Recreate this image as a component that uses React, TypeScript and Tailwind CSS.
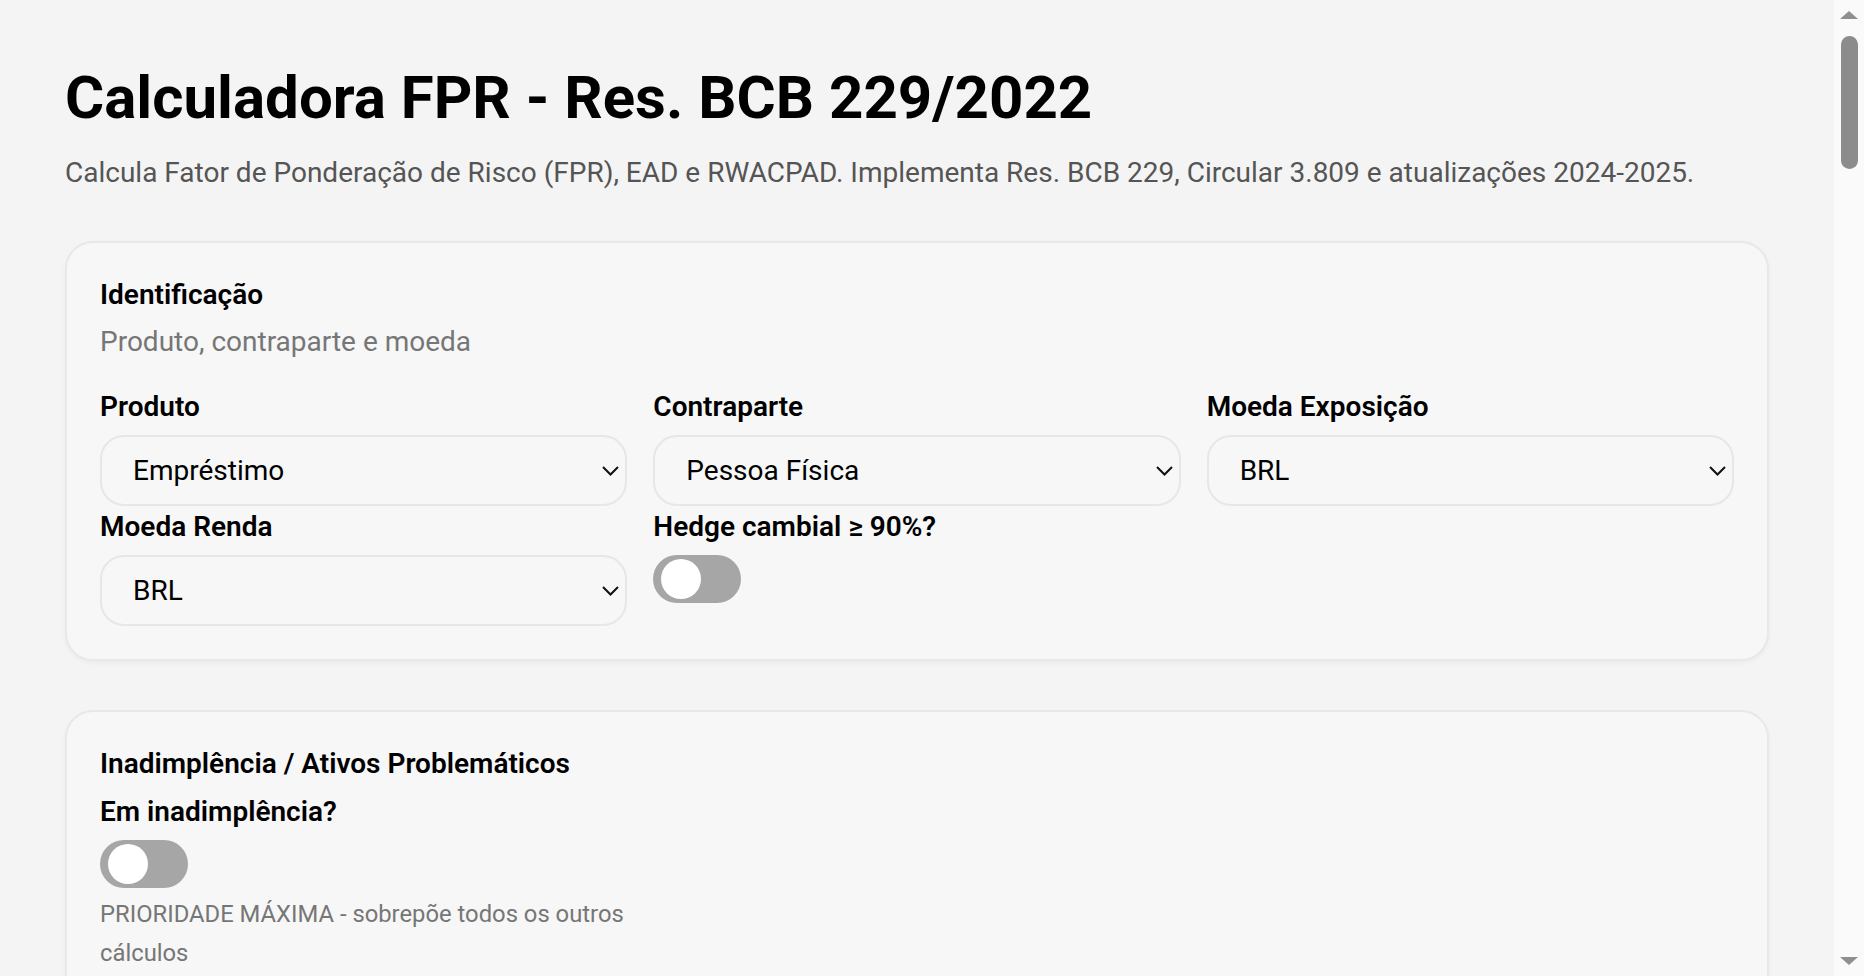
import { ReactNode } from "react";

type Option = { label: string; value: string };

type FieldDef =
  | { kind: "select"; label: string; value: string; options: Option[]; help?: string }
  | { kind: "input"; label: string; value: string; help?: string }
  | { kind: "toggle"; label: string; help?: string };

interface Section {
  title: string;
  description?: string;
  fields: FieldDef[];
}

const Chevron = () => (
  <svg
    width="17"
    height="10"
    viewBox="0 0 17 10"
    fill="none"
    className="pointer-events-none absolute right-[8px] top-1/2 -translate-y-1/2"
  >
    <polyline points="1,1 8.5,8.5 16,1" stroke="#111" strokeWidth="2" />
  </svg>
);

const Field = ({
  label,
  children,
  help,
}: {
  label: string;
  children: ReactNode;
  help?: string;
}) => (
  <div className="flex flex-col">
    <label className="mb-[7px] text-[28px] font-semibold leading-normal text-black">
      {label}
    </label>
    {children}
    {help && (
      <p className="mt-0 text-[23.8px] leading-[39px] text-[#767676]">{help}</p>
    )}
  </div>
);

const SelectField = ({ label, value, options, help }: { label: string; value: string; options: Option[]; help?: string }) => (
  <Field label={label} help={help}>
    <div className="relative">
      <select
        defaultValue={value}
        className="h-[71px] w-full appearance-none rounded-[24px] border-2 border-[#e6e6eb] bg-[#f7f7f7] pl-[31px] pr-[40px] text-[28px] text-black outline-none"
      >
        {options.map((o) => (
          <option key={o.value} value={o.value}>
            {o.label}
          </option>
        ))}
      </select>
      <Chevron />
    </div>
  </Field>
);

const Toggle = ({ on = false }: { on?: boolean }) => (
  <button
    type="button"
    className={`relative h-[48px] w-[88px] rounded-full ${on ? "bg-[#2563eb]" : "bg-[#a6a6a6]"}`}
  >
    <span
      className={`absolute top-[4px] h-[40px] w-[40px] rounded-full bg-white ${on ? "left-[40px]" : "left-[8px]"}`}
    />
  </button>
);

const InputField = ({ label, value, help }: { label: string; value: string; help?: string }) => (
  <Field label={label} help={help}>
    <input
      defaultValue={value}
      className="h-[71px] w-full rounded-[24px] border-2 border-[#e6e6eb] bg-[#f7f7f7] px-[31px] text-[28px] text-black outline-none"
    />
  </Field>
);

const renderField = (f: FieldDef) => {
  if (f.kind === "select")
    return <SelectField key={f.label} label={f.label} value={f.value} options={f.options} help={f.help} />;
  if (f.kind === "input") return <InputField key={f.label} label={f.label} value={f.value} help={f.help} />;
  return (
    <Field key={f.label} label={f.label} help={f.help}>
      <div>
        <Toggle />
      </div>
    </Field>
  );
};

const Card = ({ section }: { section: Section }) => (
  <section className="rounded-[28px] border-2 border-[#e8e8ec] bg-[#f7f7f7] px-[33px] pt-[31px] pb-[33px] shadow-[0_2px_4px_rgba(0,0,0,0.04)]">
    <h2 className="text-[28px] font-semibold leading-normal text-black">{section.title}</h2>
    {section.description && (
      <p className="mt-[5px] text-[28px] leading-normal text-[#767676]">{section.description}</p>
    )}
    <div
      className={`grid grid-cols-3 gap-x-[26px] gap-y-0 ${section.description ? "mt-[23px]" : "mt-[6px]"}`}
    >
      {section.fields.map(renderField)}
    </div>
  </section>
);

// page scrollbar rail, as drawn in the screenshot
const ScrollRail = () => (
  <div className="flex h-screen w-[30px] shrink-0 flex-col bg-[#fafafa]">
    <div className="flex h-[30px] items-center justify-center">
      <svg width="18" height="8" viewBox="0 0 18 8">
        <polygon points="0,8 9,0 18,8" fill="#8f8f8f" />
      </svg>
    </div>
    <div className="mx-auto mt-[6px] h-[133px] w-[17px] rounded-full bg-[#8c8c8c]" />
    <div className="flex-1" />
    <div className="flex h-[30px] items-center justify-center">
      <svg width="18" height="8" viewBox="0 0 18 8">
        <polygon points="0,0 18,0 9,8" fill="#8f8f8f" />
      </svg>
    </div>
  </div>
);

const produtos: Option[] = [
  { label: "Empréstimo", value: "emprestimo" },
  { label: "Financiamento", value: "financiamento" },
  { label: "Cartão de Crédito", value: "cartao" },
  { label: "Fiança", value: "fianca" },
];

const contrapartes: Option[] = [
  { label: "Pessoa Física", value: "pf" },
  { label: "Pessoa Jurídica", value: "pj" },
  { label: "Soberano", value: "soberano" },
  { label: "Instituição Financeira", value: "if" },
];

const moedas: Option[] = [
  { label: "BRL", value: "BRL" },
  { label: "USD", value: "USD" },
  { label: "EUR", value: "EUR" },
];

const pct: Option[] = [
  { label: "0%", value: "0" },
  { label: "10%", value: "10" },
  { label: "20%", value: "20" },
  { label: "50%", value: "50" },
  { label: "100%", value: "100" },
];

const sections: Section[] = [
  {
    title: "Identificação",
    description: "Produto, contraparte e moeda",
    fields: [
      { kind: "select", label: "Produto", value: "emprestimo", options: produtos },
      { kind: "select", label: "Contraparte", value: "pf", options: contrapartes },
      { kind: "select", label: "Moeda Exposição", value: "BRL", options: moedas },
      { kind: "select", label: "Moeda Renda", value: "BRL", options: moedas },
      { kind: "toggle", label: "Hedge cambial ≥ 90%?" },
    ],
  },
  {
    title: "Inadimplência / Ativos Problemáticos",
    fields: [
      {
        kind: "toggle",
        label: "Em inadimplência?",
        help: "PRIORIDADE MÁXIMA - sobrepõe todos os outros cálculos",
      },
    ],
  },
  {
    title: "Exposição",
    description: "Valores contábeis e fatores de conversão",
    fields: [
      { kind: "input", label: "Valor Contábil (R$)", value: "100000" },
      { kind: "input", label: "Provisão (R$)", value: "0" },
      { kind: "input", label: "Limite não utilizado (R$)", value: "0" },
      { kind: "select", label: "FCC", value: "0", options: pct },
      { kind: "toggle", label: "Cancelável incondicionalmente?" },
    ],
  },
  {
    title: "Varejo",
    description: "Critérios de elegibilidade Art. 37",
    fields: [
      { kind: "toggle", label: "Varejo elegível?" },
      { kind: "toggle", label: "Consignado?" },
      { kind: "input", label: "Exposição agregada (R$)", value: "0" },
      { kind: "toggle", label: "Transactor?" },
    ],
  },
  {
    title: "Imóveis",
    description: "Financiamento imobiliário e LTV",
    fields: [
      {
        kind: "select",
        label: "Tipo de Imóvel",
        value: "residencial",
        options: [
          { label: "Residencial", value: "residencial" },
          { label: "Comercial", value: "comercial" },
        ],
      },
      { kind: "input", label: "Valor do Imóvel (R$)", value: "0" },
      { kind: "input", label: "LTV (%)", value: "0" },
      { kind: "toggle", label: "Dependente do fluxo do imóvel?" },
    ],
  },
  {
    title: "Garantias",
    description: "Mitigadores de risco de crédito",
    fields: [
      {
        kind: "select",
        label: "Tipo de Garantia",
        value: "nenhuma",
        options: [
          { label: "Nenhuma", value: "nenhuma" },
          { label: "Depósito à vista", value: "deposito" },
          { label: "Título Público Federal", value: "tpf" },
        ],
      },
      { kind: "input", label: "Valor da Garantia (R$)", value: "0" },
      { kind: "select", label: "Moeda Garantia", value: "BRL", options: moedas },
      { kind: "toggle", label: "Garantia FGC / FGI?" },
    ],
  },
  {
    title: "Pessoa Jurídica",
    description: "Porte e classificação da empresa",
    fields: [
      {
        kind: "select",
        label: "Porte",
        value: "grande",
        options: [
          { label: "Grande", value: "grande" },
          { label: "Média", value: "media" },
          { label: "Pequena", value: "pequena" },
        ],
      },
      { kind: "input", label: "Receita Bruta Anual (R$)", value: "0" },
      { kind: "toggle", label: "Grau de investimento?" },
    ],
  },
  {
    title: "Instituições Financeiras",
    description: "Classificação por categoria (A, B ou C)",
    fields: [
      {
        kind: "select",
        label: "Categoria",
        value: "A",
        options: [
          { label: "A", value: "A" },
          { label: "B", value: "B" },
          { label: "C", value: "C" },
        ],
      },
      { kind: "input", label: "Prazo Original (dias)", value: "0" },
      { kind: "toggle", label: "Operação de comércio exterior?" },
    ],
  },
  {
    title: "Soberanos e Entes Públicos",
    description: "Exposições a governos e bancos centrais",
    fields: [
      {
        kind: "select",
        label: "Ente",
        value: "uniao",
        options: [
          { label: "União", value: "uniao" },
          { label: "Estados / Municípios", value: "estados" },
          { label: "Governo Estrangeiro", value: "estrangeiro" },
        ],
      },
      { kind: "select", label: "Rating País", value: "AAA", options: [{ label: "AAA a AA-", value: "AAA" }] },
      { kind: "toggle", label: "Garantia do Tesouro?" },
    ],
  },
  {
    title: "Resultado",
    description: "FPR, EAD e RWACPAD calculados",
    fields: [
      { kind: "input", label: "FPR", value: "100%" },
      { kind: "input", label: "EAD (R$)", value: "100.000,00" },
      { kind: "input", label: "RWACPAD (R$)", value: "100.000,00" },
    ],
  },
];

const memoria = [
  "1. Verifica inadimplência (Art. 64)",
  "2. Identifica o produto e a contraparte",
  "3. Aplica FCC sobre limites não utilizados",
  "4. Calcula EAD = saldo contábil - provisão + FCC × limite",
  "5. Verifica descasamento de moeda (Art. 25)",
  "6. Aplica critérios de varejo elegível",
  "7. Aplica faixas de LTV para imóveis",
  "8. Considera mitigadores de risco de crédito",
  "9. Define FPR final",
  "10. Calcula RWACPAD = EAD × FPR",
  "11. Compara com o piso regulatório",
  "12. Gera memória de cálculo detalhada",
];

export default function App() {
  return (
    <div className="flex h-screen bg-[#f4f4f4] font-['Roboto','Liberation_Sans',sans-serif] text-black">
      <main className="min-w-0 flex-1 overflow-y-auto">
        <div className="ml-[65px] w-[1704px] pt-[62px] pb-[80px]">
          <h1 className="text-[60px] font-bold leading-[72px]">
            Calculadora FPR - Res. BCB 229/2022
          </h1>
          <p className="mt-[18px] text-[28px] leading-normal text-[#555555]">
            Calcula Fator de Ponderação de Risco (FPR), EAD e RWACPAD. Implementa Res. BCB
            229, Circular 3.809 e atualizações 2024-2025.
          </p>

          <div className="mt-[47px] flex flex-col gap-[49px]">
            {sections.map((s) => (
              <Card key={s.title} section={s} />
            ))}

            <section className="rounded-[28px] border-2 border-[#e8e8ec] bg-[#f7f7f7] px-[33px] pt-[31px] pb-[33px] shadow-[0_2px_4px_rgba(0,0,0,0.04)]">
              <h2 className="text-[28px] font-semibold leading-normal">Memória de Cálculo</h2>
              <p className="mt-[5px] text-[28px] leading-normal text-[#767676]">
                Etapas aplicadas na ordem de prioridade
              </p>
              <ul className="mt-[23px] flex flex-col">
                {memoria.map((m) => (
                  <li key={m} className="text-[24px] leading-[39px] text-[#333333]">
                    {m}
                  </li>
                ))}
              </ul>
            </section>
          </div>
        </div>
      </main>
      <ScrollRail />
    </div>
  );
}
